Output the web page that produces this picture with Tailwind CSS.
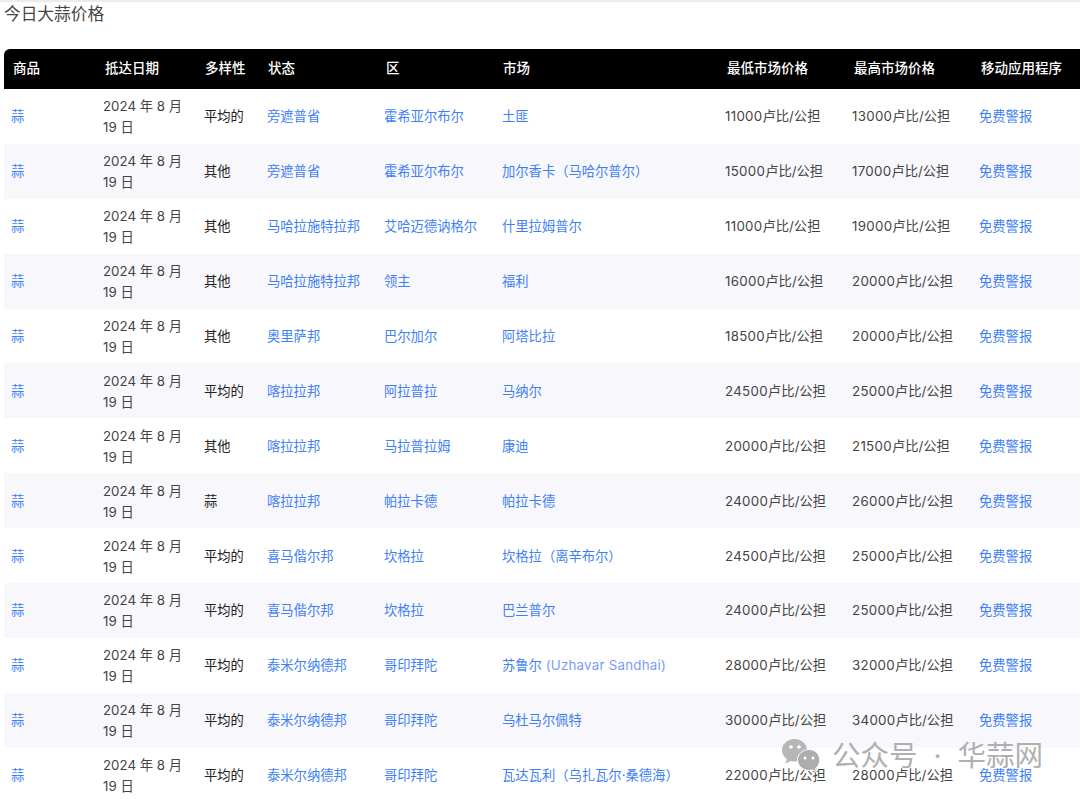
<!DOCTYPE html>
<html lang="zh">
  <head>
    <meta charset="UTF-8" />
    <title>今日大蒜价格</title>
    <script src="https://cdn.jsdelivr.net/npm/@tailwindcss/browser@4"></script>
  </head>
  <body class="relative h-[799px] w-[1080px] overflow-hidden bg-white font-['Inter','Noto_Sans_CJK_SC',sans-serif] text-[13.3px] text-[#444]">
    <div class="h-[2px] bg-[#ececec]"></div>
    <h2 class="h-[47px] pl-[4px] pt-[1px] text-[16.7px] leading-[22px] text-[#444]">今日大蒜价格</h2>

    <table id="prices" class="ml-[4px] w-[1076px] table-fixed border-separate border-spacing-0">
      <colgroup>
        <col class="w-[92px]" /><col class="w-[101px]" /><col class="w-[63px]" /><col class="w-[117px]" /><col class="w-[118px]" /><col class="w-[223px]" /><col class="w-[127px]" /><col class="w-[127px]" /><col class="w-[108px]" />
      </colgroup>
      <thead>
        <tr class="h-[40px] bg-black text-left text-[13.5px] text-white">
          <th class="rounded-tl-[6px] pb-[2px] pl-[9px] font-medium">商品</th>
          <th class="pb-[2px] pl-[9px] font-medium">抵达日期</th>
          <th class="pb-[2px] pl-[8px] font-medium">多样性</th>
          <th class="pb-[2px] pl-[8px] font-medium">状态</th>
          <th class="pb-[2px] pl-[9px] font-medium">区</th>
          <th class="pb-[2px] pl-[8px] font-medium">市场</th>
          <th class="pb-[2px] pl-[9px] font-medium">最低市场价格</th>
          <th class="pb-[2px] pl-[9px] font-medium">最高市场价格</th>
          <th class="pb-[2px] pl-[9px] font-medium">移动应用程序</th>
        </tr>
      </thead>
      <tbody id="rows"></tbody>
    </table>

    <!-- 水印 -->
    <div class="absolute left-[782px] top-[738px] flex items-center gap-[9px] text-[28.5px] leading-[36px] text-[#b0b0b0]">
      <svg width="41" height="36" viewBox="0 0 41 36">
        <path d="M12.5 1C5.6 1 0 6 0 12.2c0 3.6 1.9 6.7 4.8 8.8L3.6 25.6l5-2.6c1.2.3 2.5.5 3.9.5C19.4 23.5 25 18.500 25 12.200 25 6 19.400 1 12.500 1z" fill="#b6b6b6" />
        <circle cx="9" cy="9" r="1.800" fill="#fff" />
        <circle cx="17" cy="9" r="1.800" fill="#fff" />
        <path d="M27 11.500c-6.300 0-11.500 4.700-11.500 10.500S20.700 32.500 27 32.500c1.200 0 2.400-.2 3.500-.5l4 2.200-1-3.800c2.600-1.900 4.300-4.900 4.300-8.400 0-5.800-4.500-10.500-10.800-10.500z" fill="#adadad" stroke="#fff" stroke-width="1" />
        <circle cx="23" cy="20" r="1.500" fill="#fff" />
        <circle cx="31" cy="20" r="1.500" fill="#fff" />
      </svg>
      <span class="flex w-[211px] justify-between whitespace-nowrap"><span>公众号</span><span>·</span><span>华蒜网</span></span>
    </div>

    <script>
      const data = [
        ["平均的", "旁遮普省", "霍希亚尔布尔", "土匪", "11000", "13000"],
        ["其他", "旁遮普省", "霍希亚尔布尔", "加尔香卡（马哈尔普尔）", "15000", "17000"],
        ["其他", "马哈拉施特拉邦", "艾哈迈德讷格尔", "什里拉姆普尔", "11000", "19000"],
        ["其他", "马哈拉施特拉邦", "领主", "福利", "16000", "20000"],
        ["其他", "奥里萨邦", "巴尔加尔", "阿塔比拉", "18500", "20000"],
        ["平均的", "喀拉拉邦", "阿拉普拉", "马纳尔", "24500", "25000"],
        ["其他", "喀拉拉邦", "马拉普拉姆", "康迪", "20000", "21500"],
        ["蒜", "喀拉拉邦", "帕拉卡德", "帕拉卡德", "24000", "26000"],
        ["平均的", "喜马偕尔邦", "坎格拉", "坎格拉（离辛布尔）", "24500", "25000"],
        ["平均的", "喜马偕尔邦", "坎格拉", "巴兰普尔", "24000", "25000"],
        ["平均的", "泰米尔纳德邦", "哥印拜陀", '苏鲁尔 <span class="tracking-[0.25px] text-[#7c9af5]">(Uzhavar Sandhai)</span>', "28000", "32000"],
        ["平均的", "泰米尔纳德邦", "哥印拜陀", "乌杜马尔佩特", "30000", "34000"],
        ["平均的", "泰米尔纳德邦", "哥印拜陀", "瓦达瓦利（乌扎瓦尔·桑德海）", "22000", "28000"],
      ];
      const link = (t) => `<td class="pl-[7px] pt-[2px]"><a href="#" class="text-[#417ff5]">${t}</a></td>`;
      const price = (p) => `<td class="pl-[7px] pt-[2px] whitespace-nowrap"><span class="tracking-[0.3px]">${p}</span>卢比/公担</td>`;

      document.getElementById("rows").innerHTML = data
        .map((r, i) => `
          <tr class="h-[54.9px] ${i % 2 ? "bg-[#f7f7fc]" : "bg-white"}">
            ${link("蒜")}
            <td class="pl-[7px] pt-[2px] leading-[21px] whitespace-nowrap">2024 年 8 月<br />19 日</td>
            <td class="pl-[7px] pt-[2px] text-[#222]">${r[0]}</td>
            ${link(r[1])}${link(r[2])}${link(r[3])}
            ${price(r[4])}${price(r[5])}
            ${link("免费警报")}
          </tr>`)
        .join("");
    </script>
  </body>
</html>
